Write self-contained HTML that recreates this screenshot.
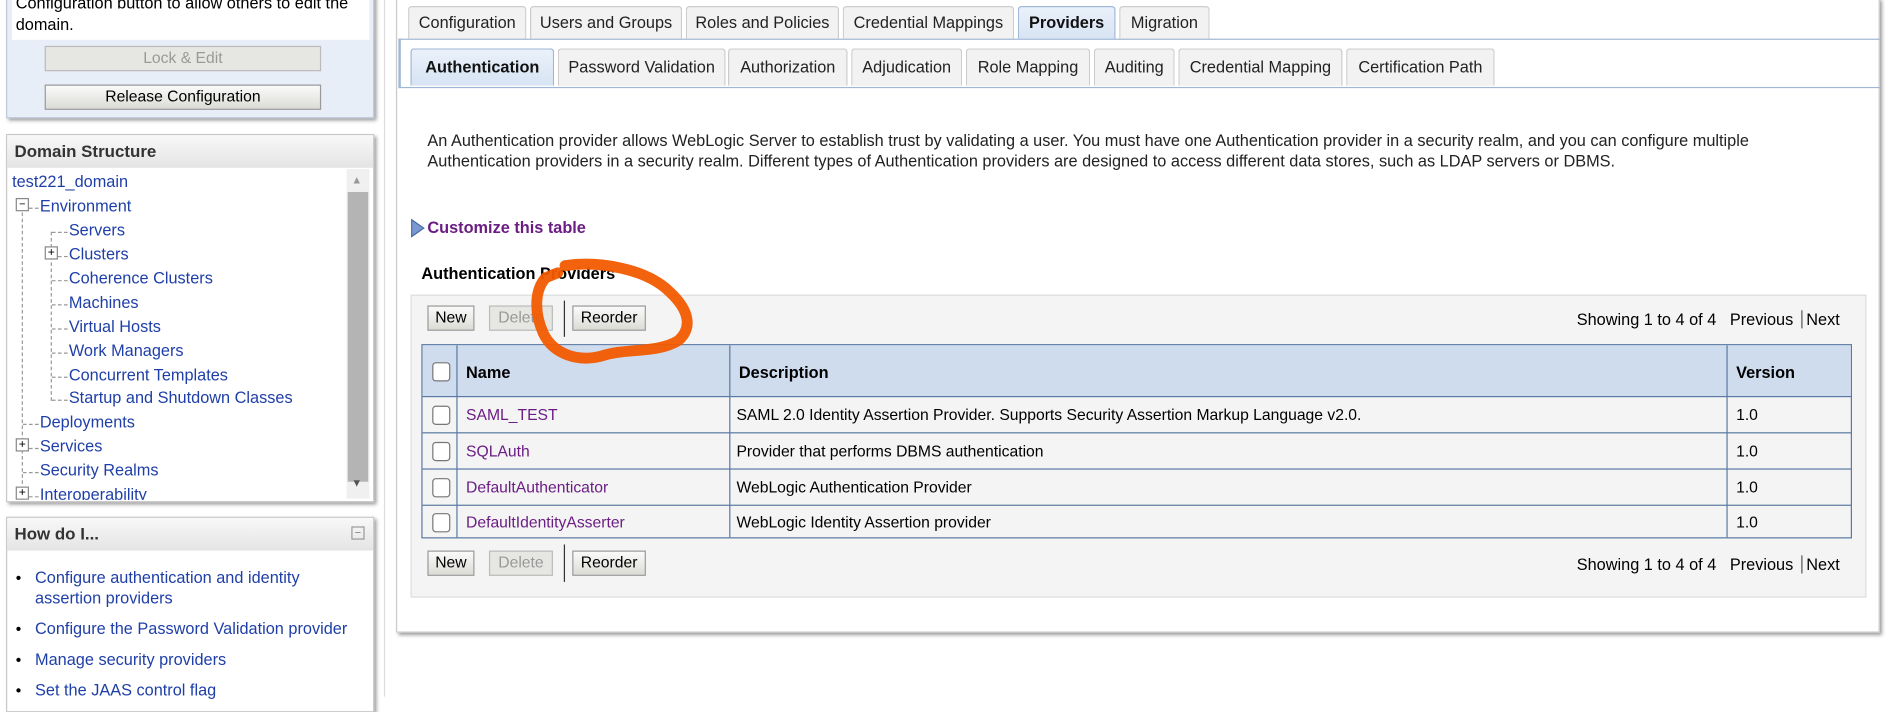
<!DOCTYPE html>
<html><head><meta charset="utf-8"><style>
html,body{margin:0;padding:0;width:1893px;height:697px;overflow:hidden;background:#fff}
#w{position:absolute;left:0;top:0;width:1568px;height:577px;transform:scale(1.2073);transform-origin:0 0;font-family:"Liberation Sans",sans-serif;font-size:13px;color:#000}
.a{position:absolute;white-space:nowrap}
.btn{position:absolute;border:1px solid #999;background:linear-gradient(#fafafa,#dcdcd6);text-align:center;font-size:13px;line-height:18px;box-sizing:border-box}
.dis{color:#999;background:#e6e6e2;border-color:#bbb}
.panel{position:absolute;left:5px;width:303px;border:1px solid #c8c8c8;box-shadow:2px 2px 3px #999;background:#fff}
.hd{position:absolute;left:0;right:0;top:0;height:27px;background:linear-gradient(#f8f8f8,#e4e4e4);font-weight:bold;font-size:14px;color:#333;padding-left:6px;line-height:27px}
.lk{color:#1f3fa8}
.tab{position:absolute;top:5px;height:27px;border:1px solid #ccc;border-bottom:none;border-radius:3px 3px 0 0;background:#f2f2f2;text-align:center;line-height:26px;font-size:13.5px;box-sizing:border-box;color:#222}
.st{top:40px;height:31px;line-height:29px}
.sel{background:linear-gradient(#eaf1fa,#d7e4f3);font-weight:bold;color:#111;border-color:#9fb6d6}
.row{position:absolute;left:350px;width:1184px;height:30px;border-top:1px solid #5a7aa3;line-height:30px}
.cb{position:absolute;left:8px;width:13px;height:14px;border:1px solid #777;border-radius:3px;background:#fff}
.vl{position:absolute;top:0;bottom:0;width:1px;background:#5a7aa3}
.tl{position:absolute;font-size:13.5px;white-space:nowrap}
.hz{position:absolute;height:0;border-top:1px dashed #999}
</style></head><body><div id="w">
<div class="panel" style="top:-5px;height:101px;background:#e8eef8;border-color:#c0c8d8">
<div style="position:absolute;left:4px;top:0;width:296px;height:37px;background:#fff"></div>
<div class="a" style="left:7px;top:-2px;font-size:13.5px;line-height:18px">Configuration button to allow others to edit the<br>domain.</div>
<div class="btn dis" style="left:31px;top:42px;width:229px;height:21px">Lock &amp; Edit</div>
<div class="btn" style="left:31px;top:74px;width:229px;height:21px">Release Configuration</div>
</div>
<div class="panel" style="top:111px;height:303px">
<div class="hd">Domain Structure</div>
<div style="position:absolute;left:281px;top:28px;width:19px;height:273px;background:#f0f0f0"></div>
<div style="position:absolute;left:282px;top:47px;width:17px;height:240px;background:#b4b4b4"></div>
<div class="a" style="left:285px;top:32px;font-size:9px;color:#999">▲</div>
<div class="a" style="left:285px;top:283px;font-size:9px;color:#555">▼</div>
<div style="position:absolute;left:0;top:28px;width:280px;height:274px;overflow:hidden">
<div style="position:absolute;left:12px;top:31px;height:250px;border-left:1px dashed #999"></div>
<div style="position:absolute;left:36px;top:52px;height:140px;border-left:1px dashed #999"></div>
<div class="hz" style="left:18px;top:32px;width:8px"></div>
<div class="hz" style="left:37px;top:52px;width:13px"></div>
<div class="hz" style="left:42px;top:72px;width:8px"></div>
<div class="hz" style="left:37px;top:92px;width:13px"></div>
<div class="hz" style="left:37px;top:112px;width:13px"></div>
<div class="hz" style="left:37px;top:132px;width:13px"></div>
<div class="hz" style="left:37px;top:152px;width:13px"></div>
<div class="hz" style="left:37px;top:172px;width:13px"></div>
<div class="hz" style="left:37px;top:191px;width:13px"></div>
<div class="hz" style="left:13px;top:211px;width:13px"></div>
<div class="hz" style="left:18px;top:231px;width:8px"></div>
<div class="hz" style="left:13px;top:251px;width:13px"></div>
<div class="hz" style="left:18px;top:271px;width:8px"></div>
<div class="tl lk" style="left:4px;top:3px">test221_domain</div>
<div class="tl" style="left:7px;top:24px;width:9px;height:9px;border:1px solid #888;background:#fff;font-size:9px;line-height:8px;text-align:center">−</div>
<div class="tl lk" style="left:27px;top:23px">Environment</div>
<div class="tl lk" style="left:51px;top:43px">Servers</div>
<div class="tl" style="left:31px;top:64px;width:9px;height:9px;border:1px solid #888;background:#fff;font-size:10px;line-height:9px;text-align:center">+</div>
<div class="tl lk" style="left:51px;top:63px">Clusters</div>
<div class="tl lk" style="left:51px;top:83px">Coherence Clusters</div>
<div class="tl lk" style="left:51px;top:103px">Machines</div>
<div class="tl lk" style="left:51px;top:123px">Virtual Hosts</div>
<div class="tl lk" style="left:51px;top:143px">Work Managers</div>
<div class="tl lk" style="left:51px;top:163px">Concurrent Templates</div>
<div class="tl lk" style="left:51px;top:182px">Startup and Shutdown Classes</div>
<div class="tl lk" style="left:27px;top:202px">Deployments</div>
<div class="tl" style="left:7px;top:223px;width:9px;height:9px;border:1px solid #888;background:#fff;font-size:10px;line-height:9px;text-align:center">+</div>
<div class="tl lk" style="left:27px;top:222px">Services</div>
<div class="tl lk" style="left:27px;top:242px">Security Realms</div>
<div class="tl" style="left:7px;top:263px;width:9px;height:9px;border:1px solid #888;background:#fff;font-size:10px;line-height:9px;text-align:center">+</div>
<div class="tl lk" style="left:27px;top:262px">Interoperability</div>
</div></div>
<div class="panel" style="top:428px;height:160px">
<div class="hd">How do I...</div>
<div class="a" style="left:285px;top:7px;width:9px;height:9px;border:1px solid #999;font-size:9px;line-height:8px;text-align:center;color:#777">−</div>
<div class="a lk" style="left:23px;top:41px;font-size:13.5px;line-height:17px">Configure authentication and identity<br>assertion providers</div>
<div class="a lk" style="left:23px;top:84px;font-size:13.5px">Configure the Password Validation provider</div>
<div class="a lk" style="left:23px;top:110px;font-size:13.5px">Manage security providers</div>
<div class="a lk" style="left:23px;top:135px;font-size:13.5px">Set the JAAS control flag</div>
<div class="a" style="left:7px;top:41px;line-height:17px">•</div>
<div class="a" style="left:7px;top:84px">•</div>
<div class="a" style="left:7px;top:110px">•</div>
<div class="a" style="left:7px;top:135px">•</div>
</div>
<div style="position:absolute;left:318px;top:0;width:1px;height:577px;background:#ddd"></div>
<div style="position:absolute;left:328px;top:-2px;width:1227px;height:524px;border:1px solid #ccc;box-shadow:2px 2px 3px #999;background:#fff"></div>
<div class="tab" style="left:338px;width:98px">Configuration</div>
<div class="tab" style="left:439px;width:126px">Users and Groups</div>
<div class="tab" style="left:568px;width:127px">Roles and Policies</div>
<div class="tab" style="left:698px;width:142px">Credential Mappings</div>
<div class="tab sel" style="left:843px;width:81px">Providers</div>
<div class="tab" style="left:927px;width:75px">Migration</div>
<div style="position:absolute;left:330px;top:32px;width:1225px;height:39px;border-top:1px solid #9fb6d6;border-bottom:1px solid #9fb6d6;border-left:2px solid #9fb6d6"></div>
<div class="tab st sel" style="left:340px;width:119px">Authentication</div>
<div class="tab st" style="left:462px;width:139px">Password Validation</div>
<div class="tab st" style="left:603px;width:99px">Authorization</div>
<div class="tab st" style="left:705px;width:92px">Adjudication</div>
<div class="tab st" style="left:800px;width:103px">Role Mapping</div>
<div class="tab st" style="left:906px;width:67px">Auditing</div>
<div class="tab st" style="left:976px;width:136px">Credential Mapping</div>
<div class="tab st" style="left:1115px;width:123px">Certification Path</div>
<div class="a" style="left:354px;top:108px;font-size:13.5px;line-height:17px;color:#222">An Authentication provider allows WebLogic Server to establish trust by validating a user. You must have one Authentication provider in a security realm, and you can configure multiple<br>Authentication providers in a security realm. Different types of Authentication providers are designed to access different data stores, such as LDAP servers or DBMS.</div>
<svg class="a" style="left:340px;top:181px" width="12" height="16"><path d="M1 1 L11 8 L1 15 Z" fill="#7b98d0" stroke="#4a68a8"/></svg>
<div class="a" style="left:354px;top:181px;font-weight:bold;color:#6b1d84;font-size:13.5px">Customize this table</div>
<div class="a" style="left:349px;top:219px;font-weight:bold;font-size:13.5px">Authentication Providers</div>
<div style="position:absolute;left:340px;top:244px;width:1204px;height:249px;background:#f4f4f4;border:1px solid #ddd"></div>
<div class="btn" style="left:354px;top:253px;width:39px;height:21px">New</div>
<div class="btn dis" style="left:405px;top:253px;width:53px;height:21px">Delete</div>
<div style="position:absolute;left:467px;top:249px;width:1px;height:30px;background:#333"></div>
<div class="btn" style="left:474px;top:253px;width:61px;height:21px">Reorder</div>
<div class="a" style="left:1306px;top:257px;font-size:13.5px">Showing 1 to 4 of 4 &nbsp; Previous <span style="border-left:1px solid #555;margin:0 3px"></span> Next</div>
<div class="btn" style="left:354px;top:456px;width:39px;height:21px">New</div>
<div class="btn dis" style="left:405px;top:456px;width:53px;height:21px">Delete</div>
<div style="position:absolute;left:467px;top:451px;width:1px;height:31px;background:#333"></div>
<div class="btn" style="left:474px;top:456px;width:61px;height:21px">Reorder</div>
<div class="a" style="left:1306px;top:460px;font-size:13.5px">Showing 1 to 4 of 4 &nbsp; Previous <span style="border-left:1px solid #555;margin:0 3px"></span> Next</div>
<div style="position:absolute;left:349px;top:285px;width:1185px;height:161px;border:1px solid #5a7aa3;background:#f4f4f4;box-sizing:border-box"></div>
<div style="position:absolute;left:350px;top:286px;width:1183px;height:42px;background:#cfdcee"></div>
<div class="a" style="left:358px;top:300px;width:13px;height:14px;border:1px solid #777;border-radius:3px;background:#fff"></div>
<div class="a" style="left:386px;top:301px;font-weight:bold;font-size:13.5px">Name</div>
<div class="a" style="left:612px;top:301px;font-weight:bold;font-size:13.5px">Description</div>
<div class="a" style="left:1438px;top:301px;font-weight:bold;font-size:13.5px">Version</div>
<div class="row" style="top:328px"><div class="cb" style="top:7px"></div><span class="a" style="left:36px;color:#6b1d84">SAML_TEST</span><span class="a" style="left:260px">SAML 2.0 Identity Assertion Provider. Supports Security Assertion Markup Language v2.0.</span><span class="a" style="left:1088px">1.0</span></div>
<div class="row" style="top:358px"><div class="cb" style="top:7px"></div><span class="a" style="left:36px;color:#6b1d84">SQLAuth</span><span class="a" style="left:260px">Provider that performs DBMS authentication</span><span class="a" style="left:1088px">1.0</span></div>
<div class="row" style="top:388px"><div class="cb" style="top:7px"></div><span class="a" style="left:36px;color:#6b1d84">DefaultAuthenticator</span><span class="a" style="left:260px">WebLogic Authentication Provider</span><span class="a" style="left:1088px">1.0</span></div>
<div class="row" style="top:418px;height:28px;line-height:28px"><div class="cb" style="top:6px"></div><span class="a" style="left:36px;color:#6b1d84">DefaultIdentityAsserter</span><span class="a" style="left:260px">WebLogic Identity Assertion provider</span><span class="a" style="left:1088px">1.0</span></div>
<div class="vl" style="left:378px;top:286px;bottom:auto;height:159px;position:absolute"></div>
<div class="vl" style="left:604px;top:286px;bottom:auto;height:159px;position:absolute"></div>
<div class="vl" style="left:1430px;top:286px;bottom:auto;height:159px;position:absolute"></div>
<svg class="a" style="left:0;top:0" width="1568" height="577"><path d="M468 220 C495 216 535 222 555 242 C572 258 573 272 562 282 C544 293 518 288 498 295 C478 300 458 293 450 276 C442 258 443 240 452 230 L462 226" fill="none" stroke="#f25a00" stroke-width="9" stroke-linecap="round" opacity="0.95"/></svg>
</div></body></html>
